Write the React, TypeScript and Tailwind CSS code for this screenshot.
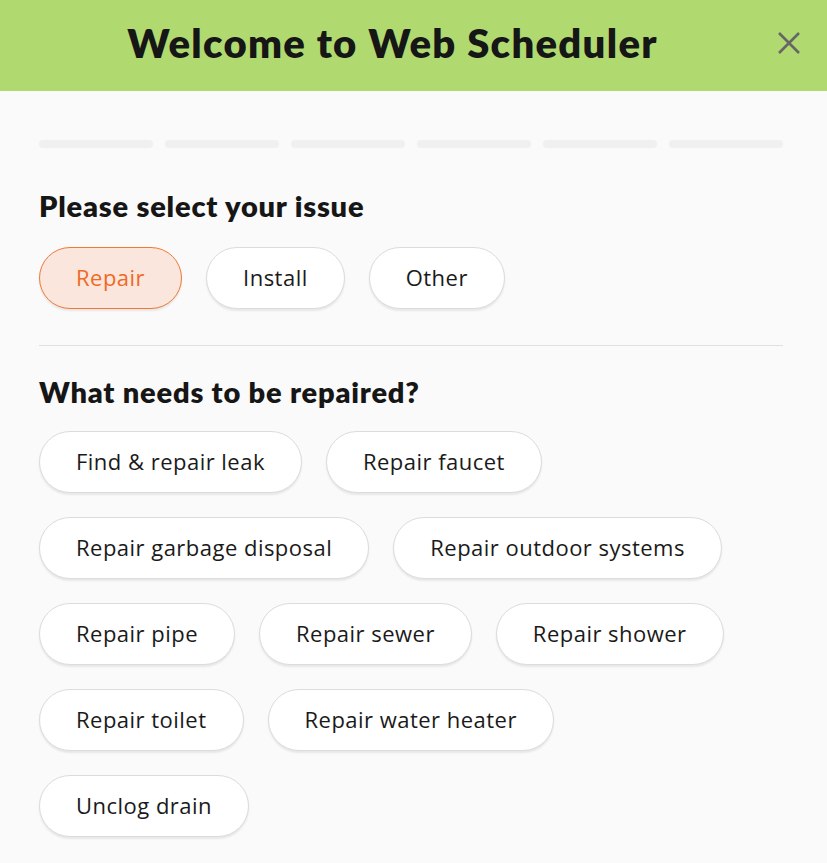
import React from "react";

const issues = ["Repair", "Install", "Other"];
const repairs = [
  ["Find & repair leak", "Repair faucet"],
  ["Repair garbage disposal", "Repair outdoor systems"],
  ["Repair pipe", "Repair sewer", "Repair shower"],
  ["Repair toilet", "Repair water heater"],
  ["Unclog drain"],
];

function Pill({ label, selected }: { label: string; selected?: boolean }) {
  return (
    <button
      className={
        selected
          ? "h-[62px] rounded-full border border-[#f07a35] bg-[#fae6dc] px-[36px] pb-[2px] text-[22px] tracking-[0.48px] text-[#f06a25] shadow-[0_2px_2px_rgba(0,0,0,0.08)]"
          : "h-[62px] rounded-full border border-[#dcdcdc] bg-white px-[36px] pb-[2px] text-[22px] tracking-[0.48px] text-[#1a1a1a] shadow-[0_2px_2px_rgba(0,0,0,0.08)]"
      }
      style={{ fontFamily: "'Open Sans', Lato, sans-serif" }}
    >
      {label}
    </button>
  );
}

export default function App() {
  return (
    <div className="min-h-[863px] w-[827px] bg-[#fafafa]">
      <div className="relative flex h-[91px] items-center justify-center bg-[#b0da70] pr-[42px] pb-[6px]">
        <h1
          className="text-[40px] font-extrabold tracking-[1.3px] text-[#161616]"
          style={{ fontFamily: "Lato, sans-serif" }}
        >
          Welcome to Web Scheduler
        </h1>
        <button className="absolute right-[26px] top-[31px] text-[#666]">
          <svg width="24" height="24" viewBox="0 0 24 24" fill="none" stroke="currentColor" strokeWidth="2.6">
            <path d="M2 2L22 22M22 2L2 22" />
          </svg>
        </button>
      </div>
      <div className="w-[744px] ml-[39px] pt-[49px]">
        <div className="flex gap-[12px]">
          {[0, 1, 2, 3, 4, 5].map((i) => (
            <div key={i} className="h-[8px] w-[114px] rounded-full bg-[#f0f0f0]" />
          ))}
        </div>
        <h2
          className="mt-[41px] text-[29px] font-extrabold leading-[34px] tracking-[0.8px] text-[#161616]"
          style={{ fontFamily: "Lato, sans-serif" }}
        >
          Please select your issue
        </h2>
        <div className="mt-[24px] flex gap-[24px]">
          {issues.map((l, i) => (
            <Pill key={l} label={l} selected={i === 0} />
          ))}
        </div>
        <div className="mt-[36px] h-px bg-[#e0e0e0]" />
        <h2
          className="mt-[29px] text-[29px] font-extrabold leading-[34px] tracking-[0.8px] text-[#161616]"
          style={{ fontFamily: "Lato, sans-serif" }}
        >
          What needs to be repaired?
        </h2>
        <div className="mt-[22px] flex flex-col gap-[24px]">
          {repairs.map((row, i) => (
            <div key={i} className="flex gap-[24px]">
              {row.map((l) => (
                <Pill key={l} label={l} />
              ))}
            </div>
          ))}
        </div>
      </div>
    </div>
  );
}
